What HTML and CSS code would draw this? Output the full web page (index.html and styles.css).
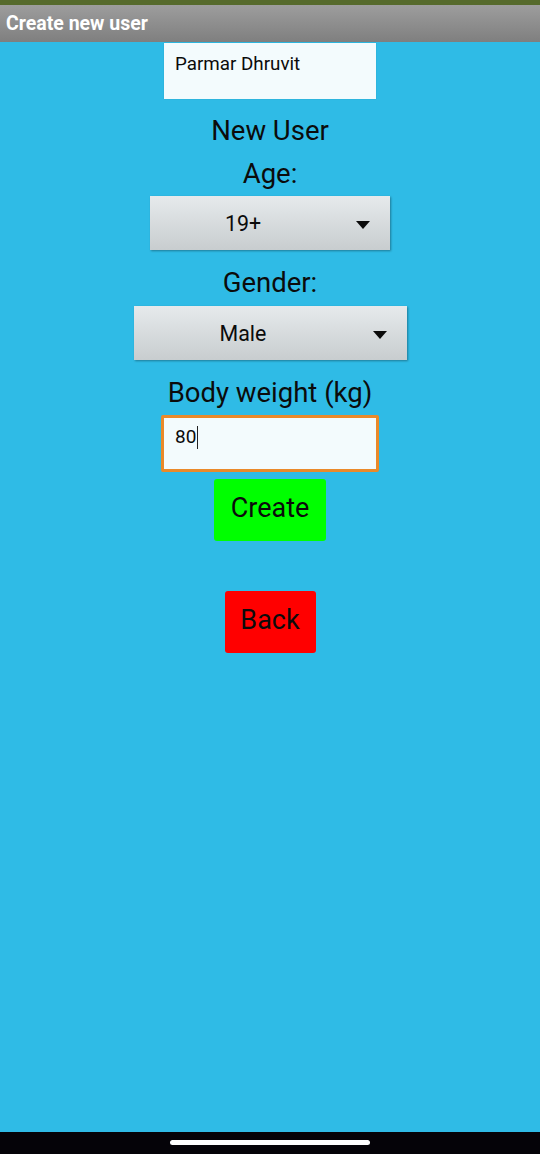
FILE: index.html
```html
<!DOCTYPE html>
<html>
<head>
<meta charset="utf-8">
<link rel="stylesheet" href="styles.css">
</head>
<body>
<div class="screen">
  <div class="strip"></div>
  <div class="titlebar">Create new user</div>
  <main class="content">
    <div class="namebox">Parmar Dhruvit</div>
    <div class="label first">New User</div>
    <div class="label age">Age:</div>
    <div class="spinner s1"><span class="val">19+</span><span class="arrow"></span></div>
    <div class="label gap">Gender:</div>
    <div class="spinner s2"><span class="val">Male</span><span class="arrow"></span></div>
    <div class="label gap">Body weight (kg)</div>
    <div class="input"><span>80</span><span class="caret"></span></div>
    <div class="btn create">Create</div>
    <div class="btn back">Back</div>
  </main>
  <div class="navbar"><div class="handle"></div></div>
</div>
</body>
</html>
```
FILE: styles.css
```css
* { box-sizing: border-box; }
html, body { margin: 0; padding: 0; }
body { font-family: Roboto, "Noto Sans", sans-serif; background: #2fbbe6; }
.screen { width: 540px; height: 1154px; display: flex; flex-direction: column; background: #2fbbe6; }
.strip { height: 5px; background: #566a2c; }
.titlebar {
  height: 37px;
  background: linear-gradient(#9d9d9d, #7f7f7f);
  color: #fff;
  font-weight: bold;
  font-size: 19.5px;
  line-height: 37px;
  padding-left: 6px;
}
.content { flex: 1; display: flex; flex-direction: column; align-items: center; color: #0b0b0b; }
.namebox {
  margin-top: 1px;
  width: 212px; height: 56px;
  background: #f3fbfd;
  font-size: 18.8px;
  padding: 10px 0 0 11px;
  box-shadow: 0 0 1px rgba(0,0,0,0.2);
}
.label { font-size: 27.5px; line-height: 30px; margin-top: 14px; }
.label.first { margin-top: 17px; }
.label.age { margin-top: 13px; }
.label.gap { margin-top: 18px; }
.spinner {
  margin-top: 7px;
  height: 54px;
  display: flex; align-items: center;
  background: linear-gradient(#e6eaec, #c8cdcf);
  box-shadow: 1px 1px 2px rgba(0,0,0,0.35);
  font-size: 21.4px;
  position: relative;
  padding-right: 54px;
}
.spinner .val { flex: 1; text-align: center; }
.s1 { width: 240px; }
.s2 { width: 273px; margin-top: 8px; }
.arrow {
  position: absolute; right: 20px; top: 25px;
  width: 0; height: 0;
  border-left: 7px solid transparent;
  border-right: 7px solid transparent;
  border-top: 8px solid #0b0b0b;
}
.input {
  margin-top: 7px;
  width: 218px; height: 57px;
  border: 3px solid #ea8a2a;
  border-radius: 2px;
  background: #f3fbfd;
  font-size: 19px;
  padding: 7px 0 0 11px;
  display: flex; align-items: flex-start;
}
.caret { width: 1px; height: 23px; background: #222; margin-left: 1px; margin-top: 1px; }
.btn {
  height: 62px; border-radius: 3px;
  font-size: 27px;
  display: flex; align-items: center; justify-content: center;
  padding-bottom: 5px;
  color: #0b0b0b;
}
.create { margin-top: 7px; width: 112px; background: #00ff00; }
.back { margin-top: 50px; width: 91px; background: #ff0000; }
.navbar { height: 22px; background: #050308; display: flex; justify-content: center; padding-top: 8px; }
.handle { width: 200px; height: 5px; border-radius: 3px; background: #fff; }
```
